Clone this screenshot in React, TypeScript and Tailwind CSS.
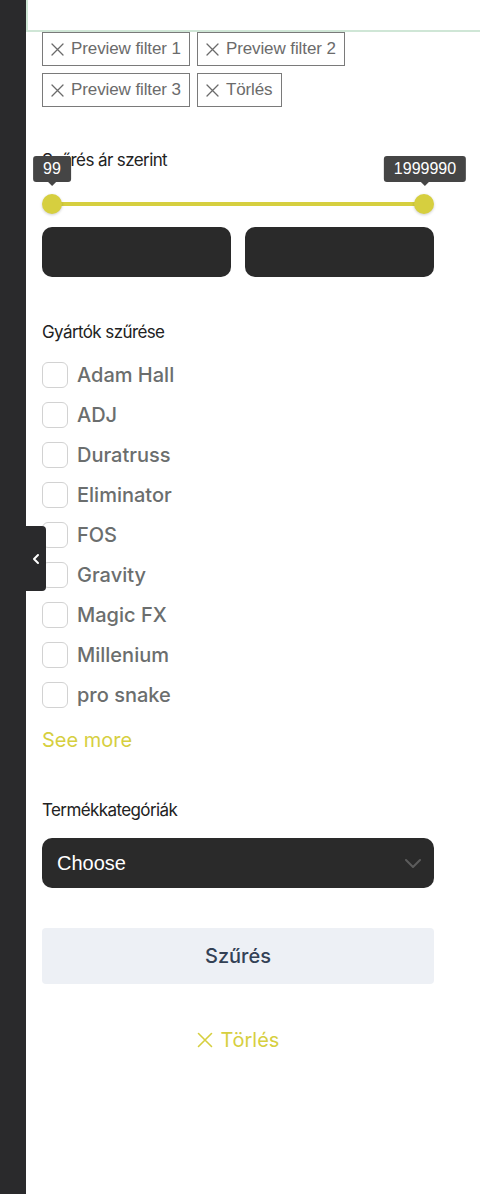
import React from 'react';

const brands = ['Adam Hall', 'ADJ', 'Duratruss', 'Eliminator', 'FOS', 'Gravity', 'Magic FX', 'Millenium', 'pro snake'];
const chips = ['Preview filter 1', 'Preview filter 2', 'Preview filter 3', 'Törlés'];

const arial = { fontFamily: '"Liberation Sans", Arial, sans-serif' };

function XIcon({ className = '' }: { className?: string }) {
  return (
    <svg width="13" height="13" viewBox="0 0 13 13" fill="none" className={className}>
      <path d="M1 1l11 11M12 1L1 12" stroke="currentColor" strokeWidth="1.3" strokeLinecap="round" />
    </svg>
  );
}

function Tooltip({ value, pos }: { value: string; pos: string }) {
  return (
    <div className={`absolute bottom-[28px] ${pos} -translate-x-1/2 flex flex-col items-center`} style={arial}>
      <div className="h-[26px] px-[10px] rounded-[3px] bg-[#454545] text-white text-[16px] leading-[26px] whitespace-nowrap">
        {value}
      </div>
      <div className="w-0 h-0 border-l-[4px] border-r-[4px] border-t-[4px] border-l-transparent border-r-transparent border-t-[#454545]" />
    </div>
  );
}

export default function App() {
  return (
    <div className="relative flex h-[1194px] w-[480px] overflow-hidden bg-white" style={{ fontFamily: 'Inter, "Noto Sans", sans-serif' }}>
      <div className="w-[26px] shrink-0 bg-[#2a2a2c]" />

      <button className="absolute left-[26px] top-[526px] w-[20px] h-[65px] bg-[#2a2a2c] rounded-r-[4px] flex items-center justify-center">
        <svg width="8" height="12" viewBox="0 0 8 12" fill="none">
          <path d="M6 2L2 6l4 4" stroke="white" strokeWidth="2" strokeLinecap="round" strokeLinejoin="round" />
        </svg>
      </button>

      <div className="flex-1 flex flex-col">
        <div className="h-[32px] w-full border-l-2 border-b-2 border-[#cfe6d6]" />

        <div className="pl-4 w-[408px] flex flex-col">
          <div className="flex flex-wrap gap-[7px] w-[392px]" style={arial}>
            {chips.map(c => (
              <div key={c} className="h-[34px] px-[8px] border border-[#7a7a7a] flex items-center gap-[7px] text-[17px] tracking-[-0.1px] text-[#6b6b6b]">
                <XIcon />
                <span>{c}</span>
              </div>
            ))}
          </div>

          <h3 className="mt-[41px] text-[17px] leading-[24px] tracking-[-0.6px] text-[#222]">Szűrés ár szerint</h3>

          <div className="relative mt-[22px] h-[20px] w-[392px]">
            <div className="absolute left-[10px] right-[10px] top-[8px] h-[4px] bg-[#d6cf3f]" />
            <div className="absolute left-0 top-0 w-[20px] h-[20px] rounded-full bg-[#d6cf3f] shadow-[0_1px_3px_rgba(0,0,0,0.2)]" />
            <div className="absolute right-0 top-0 w-[20px] h-[20px] rounded-full bg-[#d6cf3f] shadow-[0_1px_3px_rgba(0,0,0,0.2)]" />
            <Tooltip value="99" pos="left-[10px]" />
            <Tooltip value="1999990" pos="left-[383px]" />
          </div>

          <div className="mt-[13px] grid grid-cols-2 gap-[14px] w-[392px]">
            <div className="h-[50px] rounded-[10px] bg-[#2a2a2a]" />
            <div className="h-[50px] rounded-[10px] bg-[#2a2a2a]" />
          </div>

          <h3 className="mt-[43px] text-[17px] leading-[24px] tracking-[-0.6px] text-[#222]">Gyártók szűrése</h3>

          <div className="mt-[11px] flex flex-col">
            {brands.map(b => (
              <label key={b} className="h-[40px] flex items-center gap-[9px]">
                <span className="w-[26px] h-[26px] rounded-[6px] border border-[#d2d2d2] bg-white" />
                <span className="text-[20px] font-medium text-[#6b6e6e]">{b}</span>
              </label>
            ))}
          </div>

          <div className="mt-[11px] text-[20px] leading-[28px] text-[#d6cf3f]">See more</div>

          <h3 className="mt-[44px] text-[17px] leading-[24px] tracking-[-0.6px] text-[#222]">Termékkategóriák</h3>

          <div className="mt-[16px] h-[50px] w-[392px] rounded-[10px] bg-[#2a2a2a] flex items-center justify-between pl-[15px] pr-[12px]">
            <span className="text-[20px] text-white" style={arial}>Choose</span>
            <svg width="18" height="10" viewBox="0 0 18 10" fill="none">
              <path d="M2 2l7 7 7-7" stroke="#5c5c5c" strokeWidth="2" strokeLinecap="round" strokeLinejoin="round" />
            </svg>
          </div>

          <button className="mt-[40px] h-[56px] w-[392px] rounded-[4px] bg-[#edf0f5] text-[20px] font-medium text-[#334155]">
            Szűrés
          </button>

          <div className="mt-[42px] w-[392px] flex items-center justify-center gap-[8px] text-[20px] leading-[28px] text-[#d6cf3f]">
            <svg width="16" height="16" viewBox="0 0 16 16" fill="none">
              <path d="M1.5 1.5l13 13M14.5 1.5l-13 13" stroke="currentColor" strokeWidth="1.6" strokeLinecap="round" />
            </svg>
            <span>Törlés</span>
          </div>
        </div>
      </div>
    </div>
  );
}
